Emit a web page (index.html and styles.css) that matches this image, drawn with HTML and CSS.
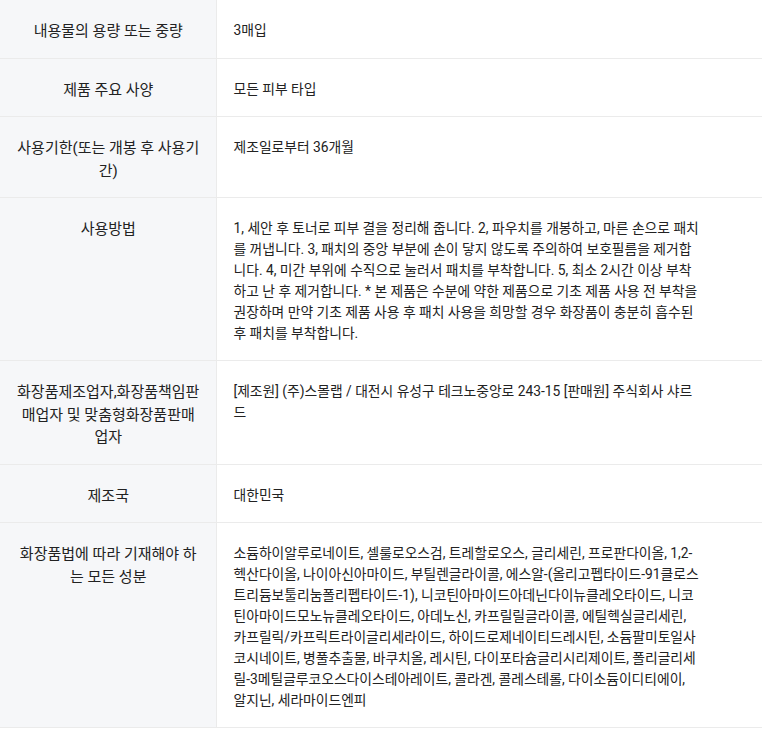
FILE: index.html
```html
<!DOCTYPE html>
<html lang="ko">
<head>
<meta charset="utf-8">
<link rel="stylesheet" href="styles.css">
</head>
<body>
<table class="spec">
  <colgroup><col class="col-label"><col class="col-value"></colgroup>
  <tbody>
    <tr><th class="label">내용물의 용량 또는 중량</th><td class="value">3매입</td></tr>
    <tr><th class="label">제품 주요 사양</th><td class="value">모든 피부 타입</td></tr>
    <tr><th class="label">사용기한(또는 개봉 후 사용기간)</th><td class="value">제조일로부터 36개월</td></tr>
    <tr><th class="label">사용방법</th><td class="value">1, 세안 후 토너로 피부 결을 정리해 줍니다. 2, 파우치를 개봉하고, 마른 손으로 패치를 꺼냅니다. 3, 패치의 중앙 부분에 손이 닿지 않도록 주의하여 보호필름을 제거합니다. 4, 미간 부위에 수직으로 눌러서 패치를 부착합니다. 5, 최소 2시간 이상 부착하고 난 후 제거합니다. * 본 제품은 수분에 약한 제품으로 기초 제품 사용 전 부착을 권장하며 만약 기초 제품 사용 후 패치 사용을 희망할 경우 화장품이 충분히 흡수된 후 패치를 부착합니다.</td></tr>
    <tr><th class="label">화장품제조업자,화장품책임판매업자 및 맞춤형화장품판매업자</th><td class="value">[제조원] (주)스몰랩 / 대전시 유성구 테크노중앙로 243-15 [판매원] 주식회사 샤르드</td></tr>
    <tr><th class="label">제조국</th><td class="value">대한민국</td></tr>
    <tr><th class="label">화장품법에 따라 기재해야 하는 모든 성분</th><td class="value">소듐하이알루로네이트, 셀룰로오스검, 트레할로오스, 글리세린, 프로판다이올, 1,2-헥산다이올, 나이아신아마이드, 부틸렌글라이콜, 에스알-(올리고펩타이드-91클로스트리듐보툴리눔폴리펩타이드-1), 니코틴아마이드아데닌다이뉴클레오타이드, 니코틴아마이드모노뉴클레오타이드, 아데노신, 카프릴릴글라이콜, 에틸헥실글리세린, 카프릴릭/카프릭트라이글리세라이드, 하이드로제네이티드레시틴, 소듐팔미토일사코시네이트, 병풀추출물, 바쿠치올, 레시틴, 다이포타슘글리시리제이트, 폴리글리세릴-3메틸글루코오스다이스테아레이트, 콜라겐, 콜레스테롤, 다이소듐이디티에이, 알지닌, 세라마이드엔피</td></tr>
  </tbody>
</table>
</body>
</html>
```

FILE: styles.css
```css
html, body {
  margin: 0;
  padding: 0;
  background: #ffffff;
}

body {
  font-family: Roboto, "Noto Sans CJK KR", sans-serif;
  font-size: 13.8px;
  line-height: 21px;
  color: #222222;
}

.spec {
  width: 762px;
  border-collapse: collapse;
  table-layout: fixed;
}

.col-label { width: 216px; }

.spec tr {
  border-bottom: 1px solid #ebebeb;
}

.label {
  background: #f6f7f9;
  border-right: 1px solid #ebebeb;
  font-weight: 400;
  font-size: 15px;
  line-height: 22.5px;
  text-align: center;
  vertical-align: top;
  padding: 20px 16px 15px 17px;
}

.value {
  vertical-align: top;
  padding: 20px 61px 16px 17px;
  text-align: left;
}
```
